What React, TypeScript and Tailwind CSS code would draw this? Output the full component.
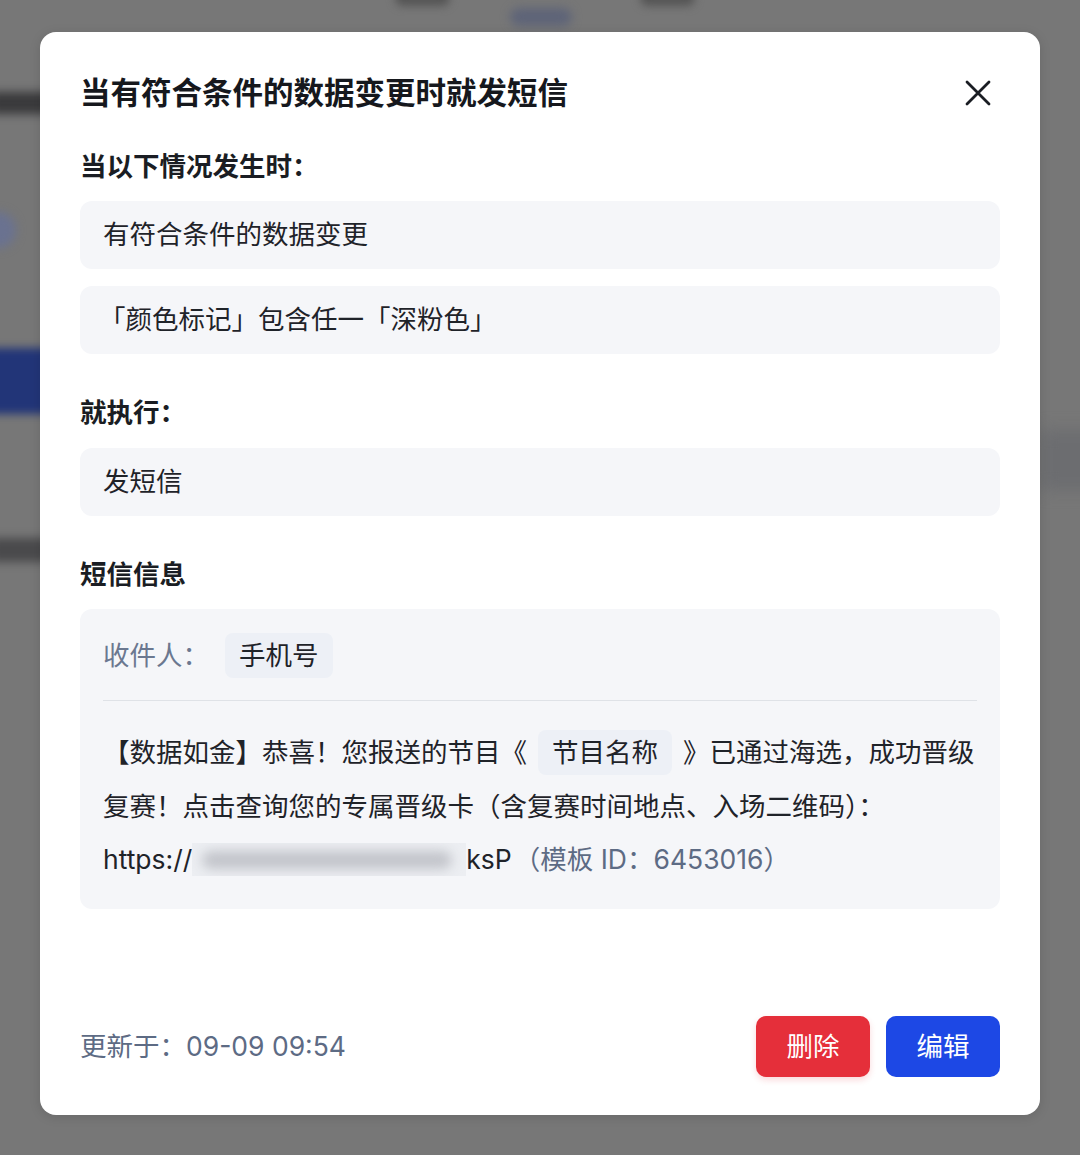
import React from "react";

const font = { fontFamily: '"Inter", "Noto Sans CJK SC", "Noto Sans", sans-serif' };

function CloseIcon() {
  return (
    <svg width="26" height="26" viewBox="0 0 26 26" fill="none">
      <path d="M2 2L24 24M24 2L2 24" stroke="#1a1d23" strokeWidth="2.8" strokeLinecap="round" />
    </svg>
  );
}

function Box({ children }: { children: React.ReactNode }) {
  return (
    <div className="flex h-[68px] items-center rounded-[12px] bg-[#f5f6f9] px-[23px] text-[26.5px] text-[#1f2329]">
      {children}
    </div>
  );
}

function Label({ children, className = "" }: { children: React.ReactNode; className?: string }) {
  return <div className={`text-[26.5px] font-bold leading-[36px] text-[#1a1d23] ${className}`}>{children}</div>;
}

export default function App() {
  return (
    <div className="relative min-h-[1155px] w-full overflow-hidden bg-[#777777]" style={font}>
      {/* blurred page behind the overlay */}
      <div className="absolute left-[395px] top-[-10px] h-[16px] w-[55px] rounded-full bg-[#555555] blur-[4px]" />
      <div className="absolute left-[510px] top-[8px] h-[18px] w-[62px] rounded-full bg-[#5e6478] blur-[5px]" />
      <div className="absolute left-[640px] top-[-10px] h-[16px] w-[55px] rounded-full bg-[#555555] blur-[4px]" />
      <div className="absolute left-[-10px] top-[92px] h-[22px] w-[60px] bg-[#3a3a3c] blur-[5px]" />
      <div className="absolute left-[-20px] top-[212px] h-[36px] w-[36px] rounded-full bg-[#6a7290] blur-[5px]" />
      <div className="absolute left-[-10px] top-[348px] h-[66px] w-[60px] bg-[#223578] blur-[4px]" />
      <div className="absolute left-[-10px] top-[538px] h-[24px] w-[60px] bg-[#4a4a4c] blur-[5px]" />
      <div className="absolute left-[1040px] top-[430px] h-[60px] w-[60px] bg-[#6c6d70] blur-[8px]" />

      <div className="relative px-[40px] pt-[32px]">
        <div className="flex h-[1083px] w-[1000px] flex-col rounded-[16px] bg-white px-[40px] pb-[38px] shadow-[0_2px_12px_rgba(0,0,0,0.12)]">
          {/* header */}
          <div className="flex items-center justify-between pt-[43px] leading-[36px]">
            <div className="text-[30.5px] font-bold text-[#16181d]">当有符合条件的数据变更时就发短信</div>
            <div className="mr-[9px] flex h-[36px] items-center">
              <CloseIcon />
            </div>
          </div>

          <Label className="mt-[37px]">当以下情况发生时：</Label>
          <div className="mt-[17px] flex flex-col gap-[17px]">
            <Box>有符合条件的数据变更</Box>
            <Box>
              <span className="-ml-[4px]">「颜色标记」包含任一「深粉色」</span>
            </Box>
          </div>

          <Label className="mt-[40px]">就执行：</Label>
          <div className="mt-[18px]">
            <Box>发短信</Box>
          </div>

          <Label className="mt-[40px]">短信信息</Label>
          <div className="mt-[17px] rounded-[12px] bg-[#f5f6f9] px-[23px] pb-[22px] pt-[24px] text-[26.5px] text-[#1f2329]">
            <div className="flex items-center">
              <span className="w-[122px] text-[#6b7890]">收件人：</span>
              <span className="flex h-[45px] items-center rounded-[8px] bg-[#edf0f6] px-[14px]">手机号</span>
            </div>
            <div className="mt-[22px] h-px bg-[#dfe2e7]" />
            <div className="mt-[25px] leading-[53.5px]">
              <div className="flex items-center whitespace-nowrap">
                <span>【数据如金】恭喜！您报送的节目《</span>
                <span className="mx-[11px] flex h-[45px] items-center rounded-[8px] bg-[#edf0f6] px-[14px]">节目名称</span>
                <span>》已通过海选，成功晋级</span>
              </div>
              <div className="whitespace-nowrap">复赛！点击查询您的专属晋级卡（含复赛时间地点、入场二维码）：</div>
              <div className="flex items-center whitespace-nowrap">
                <span>https://</span>
                <span className="relative h-[33px] w-[274px] overflow-hidden bg-[#eceef2]">
                  <span className="absolute left-[10px] top-[8px] h-[18px] w-[250px] rounded-full bg-[#c2c4ca] blur-[6px]" />
                </span>
                <span>ksP</span>
                <span className="ml-[2px] text-[#5d6b84]">（模板 ID：6453016）</span>
              </div>
            </div>
          </div>

          {/* footer */}
          <div className="mt-auto flex items-center justify-between">
            <div className="text-[26.5px] text-[#5d6b84]">更新于：09-09 09:54</div>
            <div className="flex gap-[16px]">
              <button className="flex h-[61px] w-[114px] items-center justify-center rounded-[10px] bg-[#e52f3a] text-[26.5px] text-white shadow-[0_3px_6px_rgba(229,47,58,0.18)]">
                删除
              </button>
              <button className="flex h-[61px] w-[114px] items-center justify-center rounded-[10px] bg-[#1d48e5] text-[26.5px] text-white">
                编辑
              </button>
            </div>
          </div>
        </div>
      </div>
    </div>
  );
}
